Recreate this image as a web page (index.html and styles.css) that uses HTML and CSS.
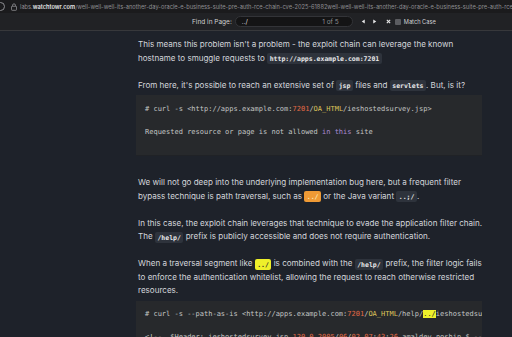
FILE: index.html
```html
<!DOCTYPE html>
<html lang="en">
<head>
<meta charset="utf-8">
<title>watchTowr Labs</title>
<link rel="stylesheet" href="styles.css">
</head>
<body>
<header class="chrome">
  <div class="urlbar">
    <span class="site-info"></span>
    <svg class="lock" viewBox="0 0 8 10" width="6" height="8"><rect x="0.6" y="4" width="6.8" height="5.4" rx="1" fill="none" stroke="#9a9a9e" stroke-width="1"/><path d="M2 4V2.8a2 2 0 0 1 4 0V4" fill="none" stroke="#9a9a9e" stroke-width="1"/></svg>
    <span class="url"><span class="dim">labs.</span><span class="host">watchtowr.com</span><span class="dim">/well-well-well-its-another-day-oracle-e-business-suite-pre-auth-rce-chain-cve-2025-61882well-well-well-its-another-day-oracle-e-business-suite-pre-auth-rce-chain-cve-2025-61882</span></span>
  </div>
  <div class="findbar">
    <span class="find-label">Find in Page:</span>
    <div class="find-input"><span class="query">../</span><span class="count">1 of 5</span></div>
    <button class="find-btn prev" aria-label="Previous"><svg viewBox="0 0 6 6" width="5" height="5"><path d="M4.5 0.6v4.8L0.9 3z" fill="#e8e8e8"/></svg></button>
    <button class="find-btn next" aria-label="Next"><svg viewBox="0 0 6 6" width="5" height="5"><path d="M1.5 0.6v4.8L5.1 3z" fill="#e8e8e8"/></svg></button>
    <button class="find-btn close" aria-label="Close"><svg viewBox="0 0 6 6" width="5" height="5"><path d="M1 1l4 4M5 1L1 5" stroke="#e8e8e8" stroke-width="1.3"/></svg></button>
    <span class="checkbox"></span>
    <span class="match-case">Match Case</span>
  </div>
</header>
<main class="page">
  <article class="post">
    <p>This means this problem isn't a problem - the exploit chain can leverage the known hostname to smuggle requests to <code>http://apps.example.com:7201</code></p>
    <p>From here, it's possible to reach an extensive set of <code>jsp</code> files and <code>servlets</code>. But, is it?</p>
    <pre class="codeblock"><code># curl -s &lt;http://apps.example.com:<span class="num">7201</span>/<span class="path">OA_HTML</span>/ieshostedsurvey.jsp&gt;

Requested resource or page is not allowed <span class="kw">in this</span> site
</code></pre>
    <p>We will not go deep into the underlying implementation bug here, but a frequent filter bypass technique is path traversal, such as <code class="current">../</code> or the Java variant <code>..;/</code>.</p>
    <p>In this case, the exploit chain leverages that technique to evade the application filter chain. The <code>/help/</code> prefix is publicly accessible and does not require authentication.</p>
    <p>When a traversal segment like <code class="hit">../</code> is combined with the <code>/help/</code> prefix, the filter logic fails to enforce the authentication whitelist, allowing the request to reach otherwise restricted resources.</p>
    <pre class="codeblock"><code># curl -s --path-as-is &lt;http://apps.example.com:<span class="num">7201</span>/<span class="path">OA_HTML</span>/help/<mark class="hitmark">../</mark>ieshostedsurvey.jsp&gt;

&lt;!--  $Header: ieshostedsurvey.jsp <span class="num">120.0.2005</span>/<span class="num">06</span>/<span class="num">02</span> <span class="num">07</span>:<span class="num">43</span>:<span class="num">26</span> amaldev noship $ --&gt;
</code></pre>
  </article>
</main>
</body>
</html>
```
FILE: styles.css
```css
html, body {
  margin: 0;
  padding: 0;
}
body {
  background: #1e222a;
  font-family: Inter, "Noto Sans", sans-serif;
  height: 337px;
  overflow: hidden;
}

.urlbar {
  height: 13px;
  background: #1b1b1d;
  display: flex;
  align-items: center;
  white-space: nowrap;
  overflow: hidden;
  font-size: 5.7px;
  color: #8e8e92;
}
.site-info {
  flex: none;
  width: 7px;
  height: 7px;
  margin-left: -4px;
  border: 1px solid #8e8e92;
  border-radius: 50%;
}
.lock {
  flex: none;
  margin-left: 6px;
  margin-right: 3px;
}
.url .host {
  color: #e6e6e8;
  font-weight: 600;
}

.findbar {
  height: 17px;
  background: #212225;
  border-bottom: 1px solid #37383b;
  display: flex;
  align-items: center;
  padding-left: 192px;
  font-size: 6.5px;
  color: #cfcfd1;
}
.find-label {
  margin-right: 3px;
}
.find-input {
  width: 118px;
  height: 11px;
  border-radius: 6px;
  background: #141415;
  border: 1px solid #333438;
  display: flex;
  align-items: center;
  justify-content: space-between;
  padding: 0 13px 0 6px;
  box-sizing: border-box;
  color: #d8d8d8;
}
.find-input .count {
  color: #8d8d90;
}
.find-btn {
  border: 0;
  background: transparent;
  padding: 0;
  width: 9px;
  height: 9px;
  display: flex;
  align-items: center;
  justify-content: center;
  margin-left: 2px;
}
.find-btn.prev {
  margin-left: 6px;
}
.find-btn.close {
  margin-left: 5px;
}
.checkbox {
  width: 6px;
  height: 6px;
  background: #5b5c60;
  border-radius: 1px;
  margin-left: 2px;
}
.match-case {
  margin-left: 3px;
  font-size: 5.7px;
}

.page {
  padding-left: 138px;
}
.post {
  width: 345px;
  color: #d3d5da;
  font-size: 8.05px;
  line-height: 13.6px;
  padding-top: 1px;
}
.post p {
  margin: 0 0 13.2px;
}
.post p:first-child {
  margin-top: 6.4px;
}
.post p code {
  font-family: "DejaVu Sans Mono", "Liberation Mono", monospace;
  font-size: 6.5px;
  line-height: 1;
  font-weight: bold;
  background: #2e333c;
  color: #e8e8ea;
  padding: 1.5px 2.5px;
  border-radius: 2px;
}
.post p code.current {
  background: #ef9a35;
  color: #fbe8b8;
}
.post p code.hit {
  background: #eef02a;
  color: #2a2a2a;
}

.codeblock {
  margin: -10.2px 1px 21px -2px;
  background: #27292c;
  padding: 8.5px 9px 17px;
  overflow: hidden;
  box-shadow: 0 1px 0 #202226;
}
.codeblock code {
  display: block;
  white-space: pre;
  font-family: "DejaVu Sans Mono", "Liberation Mono", monospace;
  font-size: 7px;
  line-height: 11.5px;
  color: #c3c6c4;
}
.codeblock .num {
  color: #e46a46;
}
.codeblock .path {
  color: #dcc35a;
}
.codeblock .kw {
  color: #a98bd3;
}
.codeblock .hitmark {
  background: #eef02a;
  color: #2a2a2a;
}
```
